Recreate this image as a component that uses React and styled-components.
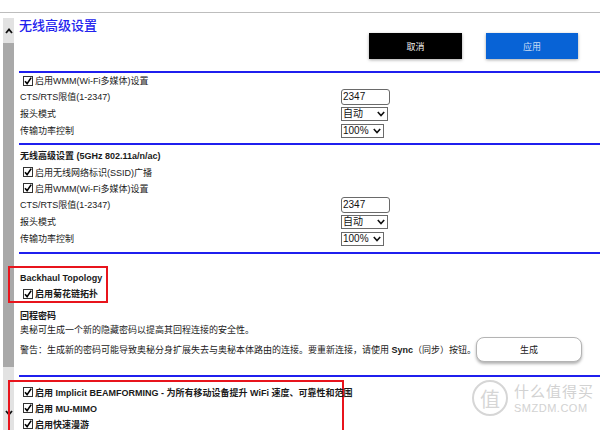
import React from 'react';
import styled, { createGlobalStyle } from 'styled-components';

const GlobalStyle = createGlobalStyle`
  html, body {
    margin: 0;
    padding: 0;
    background: #fff;
  }
  body {
    font-family: "Liberation Sans", "Noto Sans CJK SC", sans-serif;
    font-size: 9px;
    color: #1a1a1a;
  }
`;

const Frame = styled.div`
  position: relative;
  width: 600px;
  height: 430px;
  overflow: hidden;
`;

const TopStrip = styled.div`
  height: 12px;
  border-bottom: 1px solid #bdbdbd;
`;

const Body = styled.div`
  display: flex;
  align-items: flex-start;
  height: 417px;
`;

const Scrollbar = styled.div`
  width: 11px;
  height: 412px;
  flex: none;
  margin: 5px 0 0 3px;
  background: #e2e2e2;
  display: flex;
  flex-direction: column;
  align-items: center;
`;

const ArrowSlot = styled.div`
  height: ${(p) => p.$h}px;
  flex: none;
  display: flex;
  align-items: ${(p) => (p.$down ? 'flex-end' : 'center')};
  padding-bottom: ${(p) => (p.$down ? '4px' : '0')};
  box-sizing: border-box;
`;

const Thumb = styled.div`
  width: 11px;
  height: 324px;
  flex: none;
  background: #a9a9a9;
`;

const Content = styled.div`
  flex: 1;
  min-width: 0;
  margin-left: 5px;
`;

const Header = styled.div`
  padding: 4px 0 12px 0;
`;

const Title = styled.div`
  font-family: "Noto Sans CJK SC", sans-serif;
  font-size: 13px;
  font-weight: 500;
  line-height: 16px;
  color: #2222ee;
`;

const ButtonBar = styled.div`
  display: flex;
  justify-content: flex-end;
  gap: 24px;
  padding-right: 22px;
`;

const ActionButton = styled.button`
  width: ${(p) => p.$w}px;
  height: 26px;
  border: none;
  border-radius: 0;
  background: ${(p) => (p.$primary ? '#0863d6' : '#000')};
  color: ${(p) => (p.$primary ? '#c9dcf5' : '#f2f2f2')};
  font-family: "Noto Sans CJK SC", sans-serif;
  font-size: 9px;
  box-shadow: 0 1px 3px rgba(0, 0, 0, 0.35);
  padding: 0;
`;

const Divider = styled.div`
  height: 2px;
  background: #1f1fee;
  margin-top: ${(p) => p.$mt || 0}px;
`;

const Section = styled.div`
  padding: ${(p) => p.$pt || 0}px 0 ${(p) => p.$pb || 0}px 1px;
`;

const Row = styled.div`
  display: grid;
  grid-template-columns: 321px auto;
  align-items: center;
  height: ${(p) => p.$h || 17}px;
`;

const Label = styled.span`
  font-weight: ${(p) => (p.$bold ? 700 : 400)};
  white-space: nowrap;
`;

const CheckRow = styled.label`
  display: flex;
  align-items: center;
  gap: 2px;
  height: ${(p) => p.$h || 16}px;
  padding-left: 3px;
  font-weight: ${(p) => (p.$bold ? 700 : 400)};
  white-space: nowrap;
`;

const Box = styled.span`
  width: 10px;
  height: 10px;
  border: 1px solid #333;
  box-sizing: border-box;
  display: inline-flex;
  align-items: center;
  justify-content: center;
  background: #fff;
  flex: none;
`;

const TextInput = styled.div`
  width: 49px;
  height: 16px;
  box-sizing: border-box;
  border: 1px solid #6a6a6a;
  border-radius: 3px;
  font-size: 10px;
  line-height: 14px;
  padding-left: 1px;
  color: #111;
`;

const Select = styled.div`
  width: ${(p) => p.$w}px;
  height: 14px;
  box-sizing: border-box;
  border: 1px solid #6a6a6a;
  font-size: 10px;
  line-height: 12px;
  padding: 0 2px 0 1px;
  display: flex;
  align-items: center;
  justify-content: space-between;
  color: #111;
`;

const Highlight = styled.div`
  position: relative;
  z-index: 2;
  margin-left: -11px;
  width: ${(p) => p.$w}px;
  margin-top: ${(p) => p.$mt}px;
  border: 2px solid #e8141c;
  padding: 2px 0 ${(p) => p.$pb || 0}px 10px;
  box-sizing: border-box;
`;

const TextLine = styled.div`
  height: ${(p) => p.$h || 14}px;
  line-height: ${(p) => p.$h || 14}px;
  font-weight: ${(p) => (p.$bold ? 700 : 400)};
  white-space: nowrap;
`;

const WarnRow = styled.div`
  display: flex;
  align-items: center;
  height: 25px;
  padding-right: 18px;
  white-space: nowrap;
`;

const GenerateButton = styled.button`
  margin-left: auto;
  width: 106px;
  height: 25px;
  background: #fff;
  border: 1px solid #b4b4b4;
  border-radius: 8px;
  box-shadow: 0 2px 3px rgba(0, 0, 0, 0.3);
  font-family: "Noto Sans CJK SC", sans-serif;
  font-size: 9px;
  color: #222;
  padding: 0;
`;

const Watermark = styled.div`
  position: absolute;
  left: 472px;
  top: 380px;
  display: flex;
  align-items: center;
  gap: 6px;
  color: #d2d2d2;
  pointer-events: none;
`;

const Seal = styled.div`
  width: 32px;
  height: 32px;
  border: 2px solid #d6d6d6;
  border-radius: 50%;
  display: flex;
  align-items: center;
  justify-content: center;
  font-family: "Noto Sans CJK SC", sans-serif;
  font-size: 20px;
  color: #d6d6d6;
`;

const Brand = styled.div`
  display: flex;
  flex-direction: column;
  line-height: 1;
`;

const BrandCn = styled.span`
  font-family: "Noto Sans CJK SC", sans-serif;
  font-size: 15px;
  letter-spacing: 1px;
`;

const BrandEn = styled.span`
  font-family: "Liberation Sans", sans-serif;
  font-size: 11px;
  margin-top: 5px;
  letter-spacing: 0.5px;
`;

const Chevron = ({ up }) => (
  <svg width="8" height="6" viewBox="0 0 8 6">
    <polyline
      points={up ? '1,5 4,1.5 7,5' : '1,1 4,4.5 7,1'}
      fill="none"
      stroke="#111"
      strokeWidth="1.8"
    />
  </svg>
);

const SelectArrow = () => (
  <svg width="8" height="6" viewBox="0 0 8 6">
    <polyline points="0.8,1 4,4.6 7.2,1" fill="none" stroke="#111" strokeWidth="1.6" />
  </svg>
);

const Check = ({ label, bold, h }) => (
  <CheckRow $bold={bold} $h={h}>
    <Box>
      <svg width="8" height="8" viewBox="0 0 8 8">
        <polyline points="1,4.2 3.1,6.6 7.2,0.6" fill="none" stroke="#000" strokeWidth="1.6" />
      </svg>
    </Box>
    {label}
  </CheckRow>
);

const RadioSettings = ({ withSsid }) => (
  <>
    {withSsid && <Check label="启用无线网络标识(SSID)广播" />}
    <Check label="启用WMM(Wi-Fi多媒体)设置" h={withSsid ? 16 : 15} />
    <Row>
      <Label>CTS/RTS限值(1-2347)</Label>
      <TextInput>2347</TextInput>
    </Row>
    <Row>
      <Label>报头模式</Label>
      <Select $w={47}>
        自动 <SelectArrow />
      </Select>
    </Row>
    <Row>
      <Label>传输功率控制</Label>
      <Select $w={43}>
        100% <SelectArrow />
      </Select>
    </Row>
  </>
);

export default function App() {
  return (
    <Frame>
      <GlobalStyle />
      <TopStrip />
      <Body>
        <Scrollbar>
          <ArrowSlot $h={25}>
            <Chevron up />
          </ArrowSlot>
          <Thumb />
          <ArrowSlot $h={53} $down>
            <Chevron />
          </ArrowSlot>
        </Scrollbar>
        <Content>
          <Header>
            <Title>无线高级设置</Title>
            <ButtonBar>
              <ActionButton $w={93}>取消</ActionButton>
              <ActionButton $w={92} $primary>
                应用
              </ActionButton>
            </ButtonBar>
          </Header>
          <Divider />
          <Section $pb={4}>
            <RadioSettings />
          </Section>
          <Divider />
          <Section $pt={3} $pb={5}>
            <TextLine $h={16} $bold>
              无线高级设置 (5GHz 802.11a/n/ac)
            </TextLine>
            <RadioSettings withSsid />
          </Section>
          <Divider />
          <Highlight $w={100} $mt={12}>
            <TextLine $h={16} $bold>
              Backhaul Topology
            </TextLine>
            <Check label="启用菊花链拓扑" bold h={15} />
          </Highlight>
          <Section $pt={6}>
            <TextLine $bold>回程密码</TextLine>
            <TextLine>奥秘可生成一个新的隐藏密码以提高其回程连接的安全性。</TextLine>
            <WarnRow>
              <span>
                警告：生成新的密码可能导致奥秘分身扩展失去与奥秘本体路由的连接。要重新连接，请使用 <b>Sync</b>（同步）按钮。
              </span>
              <GenerateButton>生成</GenerateButton>
            </WarnRow>
          </Section>
          <Divider $mt={13} />
          <Highlight $w={336} $mt={3} $pb={10}>
            <Check label="启用 Implicit BEAMFORMING - 为所有移动设备提升 WiFi 速度、可靠性和范围" bold />
            <Check label="启用 MU-MIMO" bold />
            <Check label="启用快速漫游" bold />
          </Highlight>
        </Content>
      </Body>
      <Watermark>
        <Seal>值</Seal>
        <Brand>
          <BrandCn>什么值得买</BrandCn>
          <BrandEn>SMZDM.COM</BrandEn>
        </Brand>
      </Watermark>
    </Frame>
  );
}
